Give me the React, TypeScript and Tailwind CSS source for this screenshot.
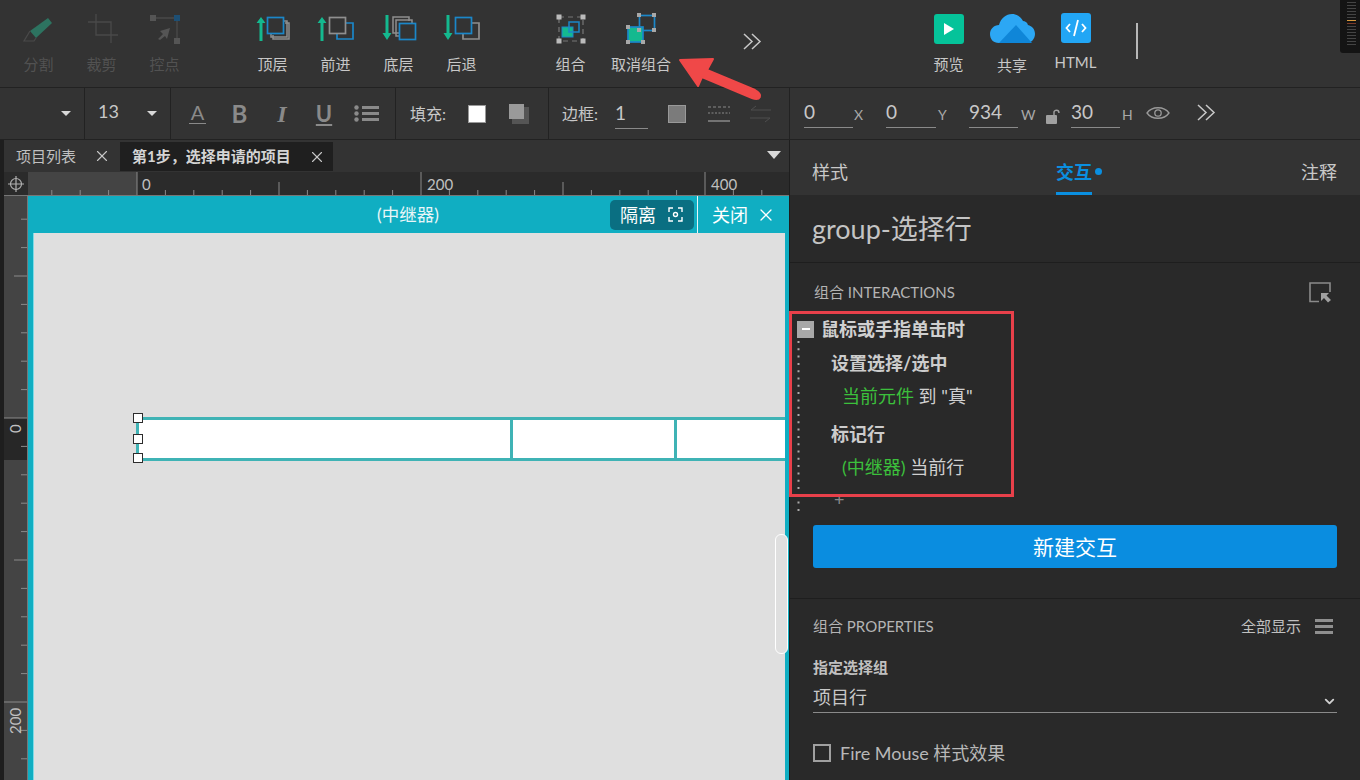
// Axure-style editor window: toolbar, canvas and interactions panel
import React from 'react';
import { ChevronDown, X } from 'lucide-react';

const GRAY = '#8f8f8f';
const BLUE = '#1b87c9';
const GREEN = '#14b98f';

function Arrow({ x, up }: { x: number; up: boolean }) {
  return up ? (
    <path d={`M${x - 1.5} 29V11H${x - 4.5}L${x} 5L${x + 4.5} 11H${x + 1.5}V29Z`} fill={GREEN} />
  ) : (
    <path d={`M${x - 1.5} 3V21H${x - 4.5}L${x} 28L${x + 4.5} 21H${x + 1.5}V3Z`} fill={GREEN} />
  );
}

function Icon({ children }: { children: React.ReactNode }) {
  return (
    <svg width="40" height="32" viewBox="0 0 40 32" fill="none">
      {children}
    </svg>
  );
}

const icons: Record<string, React.ReactNode> = {
  split: (
    <Icon>
      <path d="M11 19L29 6L33 11L17 26Z" fill="#2d7360" />
      <path d="M11 19L5 29H15L17 26" stroke="#4a4a4a" strokeWidth="1.2" />
    </Icon>
  ),
  crop: (
    <Icon>
      <path d="M6 10H29V31M14 2V23H36" stroke="#4a4a4a" strokeWidth="1.3" />
    </Icon>
  ),
  points: (
    <Icon>
      <path d="M8 6H32V29" stroke="#4a4a4a" strokeWidth="1.3" />
      <rect x="5" y="3" width="6" height="6" fill="#555" />
      <rect x="29" y="3" width="6" height="6" fill="#1d4f74" />
      <rect x="29" y="26" width="6" height="6" fill="#555" />
      <path d="M25 16L15 19L18 22L13 27L15 28L20 24L22 27Z" fill="#555" />
    </Icon>
  ),
  top: (
    <Icon>
      <Arrow x={8} up />
      <path d="M20 23V27H36V11H32" stroke={GRAY} strokeWidth="1.5" />
      <path d="M18 21V25H34V9H30" stroke={GRAY} strokeWidth="1.5" />
      <rect x="14.5" y="5.5" width="16" height="16" stroke={BLUE} strokeWidth="1.7" />
    </Icon>
  ),
  forward: (
    <Icon>
      <Arrow x={6} up />
      <path d="M30 11H37V27H21V22" stroke={BLUE} strokeWidth="1.7" />
      <rect x="13.5" y="5.5" width="16" height="16" stroke={GRAY} strokeWidth="1.7" />
    </Icon>
  ),
  bottom: (
    <Icon>
      <Arrow x={8} up={false} />
      <path d="M20 21H14V5H30V9" stroke={GRAY} strokeWidth="1.5" />
      <path d="M20 24H17V8H33V11" stroke={GRAY} strokeWidth="1.5" />
      <rect x="20.5" y="11.5" width="16" height="16" stroke={BLUE} strokeWidth="1.7" />
    </Icon>
  ),
  back: (
    <Icon>
      <Arrow x={6} up={false} />
      <path d="M30 11H37V27H21V22" stroke={GRAY} strokeWidth="1.7" />
      <rect x="13.5" y="5.5" width="16" height="16" stroke={BLUE} strokeWidth="1.7" />
    </Icon>
  ),
  group: (
    <Icon>
      <rect x="8" y="5" width="24" height="24" stroke="#777" strokeWidth="1.2" strokeDasharray="5 4" />
      <rect x="5.5" y="2.5" width="5" height="5" fill="#bbb" />
      <rect x="29.5" y="2.5" width="5" height="5" fill="#bbb" />
      <rect x="5.5" y="26.5" width="5" height="5" fill="#bbb" />
      <rect x="29.5" y="26.5" width="5" height="5" fill="#bbb" />
      <rect x="11" y="15" width="11" height="10" fill={GREEN} stroke={BLUE} />
      <rect x="18" y="10" width="10" height="10" stroke={BLUE} strokeWidth="1.5" />
    </Icon>
  ),
  ungroup: (
    <Icon>
      <rect x="18.5" y="3.5" width="15" height="15" stroke={BLUE} strokeWidth="1.7" />
      <rect x="7" y="15" width="15" height="15" fill={GREEN} stroke={BLUE} strokeWidth="1.7" />
      {[
        [18, 3],
        [33, 3],
        [33, 18],
        [18, 18],
        [7, 15],
        [7, 30],
        [22, 30],
      ].map(([x, y]) => (
        <rect key={`${x}-${y}`} x={x - 2} y={y - 2} width="4" height="4" fill="#a8a8a8" />
      ))}
    </Icon>
  ),
};

function ToolItem({ label, icon, dim, width = 'w-[63px]' }: { label: string; icon: string; dim?: boolean; width?: string }) {
  return (
    <div className={`${width} flex flex-col items-center pt-[12px]`}>
      <div className="h-[32px]">{icons[icon]}</div>
      <span className={`mt-[10px] text-[15px] leading-[20px] whitespace-nowrap ${dim ? 'text-[#525252]' : 'text-[#c8c8c8]'}`}>{label}</span>
    </div>
  );
}

function DoubleChevron() {
  return (
    <svg width="19" height="17" viewBox="0 0 19 17" fill="none" stroke="#c8c8c8" strokeWidth="1.5">
      <path d="M1 1L9 8.5L1 16M9 1L17 8.5L9 16" />
    </svg>
  );
}

function Caret({ className = '' }: { className?: string }) {
  return <span className={`w-0 h-0 border-x-[5px] border-x-transparent border-t-[5px] border-t-[#d8d8d8] ${className}`} />;
}

function NumField({ value, width }: { value: string; width: string }) {
  return <div className={`${width} h-[30px] border-b border-[#8a8a8a] text-[19px] leading-[27px] text-[#c8c8c8]`}>{value}</div>;
}

function Axis({ label, className = '' }: { label: string; className?: string }) {
  return <span className={`text-[14px] text-[#a8a8a8] pt-[3px] ${className}`}>{label}</span>;
}

function TopRuler() {
  const ticks = Array.from({ length: 27 }, (_, i) => 137 - 28.4 * 3 + 28.4 * i);
  return (
    <svg width="761" height="24" viewBox="28 172 761 24" className="block">
      <rect x="28" y="172" width="109" height="24" fill="#444" />
      <rect x="137" y="172" width="652" height="24" fill="#2b2b2b" />
      {ticks.map((p, i) => {
        const rel = i - 3;
        const major = rel % 10 === 0;
        const mid = rel % 5 === 0;
        return <line key={i} x1={p} x2={p} y1={major ? 172 : mid ? 182 : 190} y2="196" stroke="#8a8a8a" />;
      })}
      <line x1="28" x2="789" y1="195.5" y2="195.5" stroke="#777" />
      <text x="142" y="190" fontSize="15" fill="#c0c0c0">0</text>
      <text x="427" y="190" fontSize="15" fill="#c0c0c0">200</text>
      <text x="711" y="190" fontSize="15" fill="#c0c0c0">400</text>
    </svg>
  );
}

function LeftRuler() {
  const ticks = Array.from({ length: 22 }, (_, i) => 418 + 28.4 * (i - 8));
  return (
    <svg width="24" height="584" viewBox="4 196 24 584" className="block shrink-0">
      <rect x="4" y="196" width="24" height="584" fill="#444" />
      <rect x="4" y="418" width="24" height="42" fill="#272727" />
      {ticks.map((y, i) => {
        const rel = i - 8;
        const major = rel % 10 === 0;
        const mid = rel % 5 === 0;
        return <line key={i} x1={major ? 4 : mid ? 14 : 21} x2="28" y1={y} y2={y} stroke="#8a8a8a" />;
      })}
      <line x1="27.5" x2="27.5" y1="196" y2="780" stroke="#777" />
      <text transform="translate(21 433) rotate(-90)" fontSize="15" fill="#c0c0c0">0</text>
      <text transform="translate(21 734) rotate(-90)" fontSize="15" fill="#c0c0c0">200</text>
    </svg>
  );
}

function Handle({ className }: { className: string }) {
  return <div className={`absolute left-[105px] w-[10px] h-[10px] bg-white border-[1.5px] border-[#2c2c2c] ${className}`} />;
}

export default function App() {
  return (
    <div className="relative w-[1360px] h-[780px] overflow-hidden flex flex-col bg-[#333333] font-['Lato','Noto_Sans_CJK_SC',sans-serif]">
      {/* Top toolbar */}
      <div className="h-[88px] shrink-0 flex pl-[7px] border-b border-[#222222]">
        <ToolItem label="分割" icon="split" dim />
        <ToolItem label="裁剪" icon="crop" dim />
        <ToolItem label="控点" icon="points" dim />
        <div className="w-[45px]" />
        <ToolItem label="顶层" icon="top" />
        <ToolItem label="前进" icon="forward" />
        <ToolItem label="底层" icon="bottom" />
        <ToolItem label="后退" icon="back" />
        <div className="w-[46px]" />
        <ToolItem label="组合" icon="group" />
        <div className="w-[6px]" />
        <ToolItem label="取消组合" icon="ungroup" width="w-[66px]" />
        <div className="w-[243px] flex items-start pt-[33px] pl-[69px]">
          <DoubleChevron />
        </div>
        <div className="w-[63px] flex flex-col items-center pt-[14px]">
          <div className="w-[30px] h-[30px] rounded-[3px] bg-[#05c39a] flex items-center justify-center">
            <svg width="10" height="12" viewBox="0 0 10 12"><path d="M0 0L10 6L0 12Z" fill="#fff" /></svg>
          </div>
          <span className="mt-[10px] text-[15px] leading-[20px] text-[#c8c8c8]">预览</span>
        </div>
        <div className="w-[64px] flex flex-col items-center pt-[14px]">
          <svg width="45" height="30" viewBox="0 0 45 30">
            <path d="M9 29C3 29 0 25 0 20C0 15 4 11 9 11C11 4 16 0 22 0C27 0 31 3 33 7C35 7 37 8 38 11C42 12 45 15 45 20C45 25 41 29 37 29Z" fill="#2ca7f4" />
            <path d="M9 29L26 11L42 29Z" fill="#0f86d8" />
          </svg>
          <span className="mt-[11px] text-[15px] leading-[20px] text-[#c8c8c8]">共享</span>
        </div>
        <div className="w-[63px] flex flex-col items-center pt-[13px]">
          <div className="w-[30px] h-[30px] rounded-[3px] bg-[#22a6f5] flex items-center justify-center">
            <svg width="22" height="18" viewBox="0 0 22 18" fill="none" stroke="#fff" strokeWidth="1.8">
              <path d="M5 5L1.5 9L5 13M17 5L20.5 9L17 13M13 1L9 17" />
            </svg>
          </div>
          <span className="mt-[9px] text-[15px] leading-[20px] text-[#c8c8c8]">HTML</span>
        </div>
        <div className="ml-[29px] mt-[23px] w-[2px] h-[36px] bg-[#b8b8b8]" />
      </div>

      {/* Format bar */}
      <div className="h-[52px] shrink-0 flex border-b border-[#222222] text-[#c8c8c8]">
        <div className="w-[85px] border-r border-[#222222] flex items-center justify-end pr-[13px]">
          <Caret />
        </div>
        <div className="w-[86px] border-r border-[#222222] flex items-center justify-between pl-[13px] pr-[13px]">
          <span className="text-[18px] pb-[4px]">13</span>
          <Caret />
        </div>
        <div className="w-[225px] border-r border-[#222222] flex items-center pl-[18px] gap-[21px] text-[#8a8a8a]">
          <div className="w-[17px] flex flex-col items-center">
            <span className="text-[20px] leading-[19px] text-[#8a8a8a]">A</span>
            <div className="w-[17px] h-px bg-[#8a8a8a] mt-[1px]" />
          </div>
          <span className="w-[25px] text-center text-[24px] font-bold leading-none">B</span>
          <span className="w-[18px] text-center text-[24px] font-bold italic leading-none font-['Liberation_Serif',serif]">I</span>
          <span className="w-[24px] text-center text-[22px] font-bold underline leading-none">U</span>
          <svg className="-ml-[3px]" width="25" height="17" viewBox="0 0 25 17" fill="#8a8a8a">
            <circle cx="2.5" cy="2.5" r="2.2" /><circle cx="2.5" cy="8.5" r="2.2" /><circle cx="2.5" cy="14.5" r="2.2" />
            <rect x="8" y="1" width="17" height="3" /><rect x="8" y="7" width="17" height="3" /><rect x="8" y="13" width="17" height="3" />
          </svg>
        </div>
        <div className="w-[153px] border-r border-[#222222] flex items-center pl-[14px]">
          <span className="text-[16px] w-[58px] whitespace-nowrap">填充:</span>
          <div className="w-[18px] h-[18px] bg-white border border-[#999]" />
          <div className="relative ml-[23px] w-[20px] h-[20px]">
            <div className="absolute left-[3px] top-[3px] w-[17px] h-[17px] bg-[#555555]" />
            <div className="absolute left-0 top-0 w-[15px] h-[15px] bg-[#9a9a9a]" />
          </div>
        </div>
        <div className="w-[241px] border-r border-[#222222] flex items-center pl-[13px]">
          <span className="text-[16px] w-[53px] whitespace-nowrap">边框:</span>
          <NumField value="1" width="w-[33px]" />
          <div className="ml-[20px] w-[18px] h-[18px] bg-[#7b7b7b] border border-[#999]" />
          <svg className="ml-[22px]" width="22" height="18" viewBox="0 0 22 18" stroke="#8a8a8a" fill="none">
            <path d="M0 2H22" strokeDasharray="3 2" /><path d="M0 8H22" strokeDasharray="2 1.5" /><path d="M0 16H22" strokeWidth="1.5" />
          </svg>
          <svg className="ml-[20px]" width="21" height="18" viewBox="0 0 21 18" stroke="#4e4e4e" fill="none">
            <path d="M21 5H1L6 1M0 13H20L15 17" />
          </svg>
        </div>
        <div className="flex-1 flex items-center pl-[14px] pb-[2px]">
          <NumField value="0" width="w-[49px]" />
          <Axis label="X" className="ml-[1px] w-[32px]" />
          <NumField value="0" width="w-[50px]" />
          <Axis label="Y" className="ml-[2px] w-[31px]" />
          <NumField value="934" width="w-[49px]" />
          <Axis label="W" className="ml-[3px] w-[25px]" />
          <svg className="mt-[8px]" width="15" height="16" viewBox="0 0 15 16" fill="none">
            <rect x="0" y="6" width="11" height="9" rx="1" fill="#a0a0a0" />
            <path d="M8 6V3C8 1 13 0 13 4" stroke="#a0a0a0" strokeWidth="1.4" />
          </svg>
          <div className="w-[10px]" />
          <NumField value="30" width="w-[49px]" />
          <Axis label="H" className="ml-[2px] w-[23px]" />
          <svg className="ml-[1px]" width="24" height="14" viewBox="0 0 24 14" fill="none" stroke="#9a9a9a" strokeWidth="1.3">
            <path d="M1 7C6 0 18 0 23 7C18 14 6 14 1 7Z" /><circle cx="12" cy="7" r="3.2" />
          </svg>
          <div className="ml-[27px]"><DoubleChevron /></div>
        </div>
      </div>

      <div className="flex-1 flex min-h-0">
        {/* Canvas column */}
        <div className="w-[789px] shrink-0 flex flex-col bg-[#1e1e1e]">
          <div className="h-[32px] shrink-0 flex pt-[2px] bg-[#333333] border-l-4 border-[#1e1e1e]">
            <div className="w-[116px] h-[28px] flex items-center pl-[12px] justify-between pr-[9px]">
              <span className="text-[15px] text-[#c0c0c0]">项目列表</span>
              <X size={18} strokeWidth={1.5} className="text-[#c8c8c8]" />
            </div>
            <div className="w-[213px] h-[29px] bg-[#1f1f1f] flex items-center pl-[12px] justify-between pr-[7px]">
              <span className="text-[15px] font-bold text-[#d4d4d4] whitespace-nowrap">{'第1步\uFF0C选择申请的项目'}</span>
              <X size={18} strokeWidth={1.5} className="text-[#c8c8c8]" />
            </div>
            <div className="flex-1 flex justify-end items-center pr-[8px] pb-[4px]">
              <span className="w-0 h-0 border-x-[7px] border-x-transparent border-t-[8px] border-t-[#d8d8d8]" />
            </div>
          </div>

          <div className="h-[24px] shrink-0 flex pl-[4px]">
            <div className="w-[24px] flex items-center justify-center bg-[#2b2b2b] border-b border-[#777]">
              <svg width="16" height="16" viewBox="0 0 16 16" fill="none" stroke="#b0b0b0" strokeWidth="1.2">
                <circle cx="8" cy="8" r="5.5" /><path d="M8 0V16M0 8H16" />
              </svg>
            </div>
            <TopRuler />
          </div>

          <div className="flex-1 flex pl-[4px] min-h-0">
            <LeftRuler />
            <div className="relative flex-1 flex flex-col bg-[#10aec2]">
              <div className="relative h-[37px] shrink-0 flex items-center text-white">
                <span className="absolute left-[349px] top-[6px] text-[17.5px] text-[#e8f6f8]">(中继器)</span>
                <div className="ml-[582px] w-[84px] h-[30px] rounded-[5px] bg-[#0a6f82] flex items-center pl-[10px] gap-[12px]">
                  <span className="text-[18px] leading-none">隔离</span>
                  <svg width="15" height="15" viewBox="0 0 15 15" fill="none" stroke="#fff" strokeWidth="1.4">
                    <path d="M1 5V1H5M10 1H14V5M14 10V14H10M5 14H1V10" /><circle cx="7.5" cy="7.5" r="2" />
                  </svg>
                </div>
                <div className="ml-[3px] w-[1px] h-[37px] bg-[#e8f6f8]" />
                <span className="ml-[14px] text-[18px] leading-none">关闭</span>
                <X size={20} strokeWidth={1.5} className="ml-[8px]" />
              </div>
              <div className="flex-1 ml-[5px] mr-[4px] bg-[#dfdfdf] border-l border-[#7fdbe6]" />

              {/* Selected row on the canvas */}
              <div className="absolute left-[108px] top-[221px] w-[649px] h-[44px] flex bg-white border-y-[3px] border-l-[3px] border-[#3fb3b5]">
                <div className="w-[374px] border-r-[3px] border-[#3fb3b5]" />
                <div className="w-[164px] border-r-[3px] border-[#3fb3b5]" />
              </div>
              <Handle className="top-[217px]" />
              <Handle className="top-[238px]" />
              <Handle className="top-[257px]" />

              {/* Scrollbar */}
              <div className="absolute left-[747px] top-[338px] w-[13px] h-[120px] rounded-[6px] bg-[#dfdfdf] border border-white" />
            </div>
          </div>
        </div>

        {/* Right panel */}
        <div className="flex-1 flex flex-col bg-[#292929] border-l border-[#1e1e1e] text-[#c8c8c8]">
          <div className="h-[55px] shrink-0 flex items-stretch justify-between px-[22px] bg-[#333333]">
            <span className="text-[18px] pt-[19px]">样式</span>
            <div className="flex flex-col ml-[9px]">
              <div className="flex items-center pt-[19px]">
                <div className="border-b-[3px] border-[#0a8fe0] h-[36px]">
                  <span className="text-[18px] leading-[27px] font-bold text-[#0a8fe0] block">交互</span>
                </div>
                <div className="w-[7px] h-[7px] rounded-full bg-[#0a8fe0] ml-[3px] -mt-[12px]" />
              </div>
            </div>
            <span className="text-[18px] pt-[19px] pr-[1px]">注释</span>
          </div>

          <div className="h-[68px] shrink-0 border-b border-[#1e1e1e] pl-[22px] pt-[15px] text-[27px] leading-[38px] text-[#c4c4c4]">group-选择行</div>

          <div className="flex justify-between items-center pl-[24px] pr-[28px] h-[22px] mt-[18px]">
            <span className="text-[15px] text-[#b4b4b4]">组合 INTERACTIONS</span>
            <svg width="23" height="21" viewBox="0 0 23 21" fill="none">
              <path d="M10 19.5H1V1H21V10" stroke="#8a8a8a" strokeWidth="1.6" />
              <path d="M12 11H20L17.5 13.5L22 18L19 20.5L15 16L12 19Z" fill="#a0a0a0" />
            </svg>
          </div>

          {/* Interaction tree */}
          <div className="pl-[7px] mt-[16px]">
            <div className="flex items-center h-[20px]">
              <div className="w-[17px] h-[17px] bg-[#a8a8a8] flex items-center justify-center">
                <div className="w-[8px] h-[2px] bg-white" />
              </div>
              <span className="ml-[7px] text-[18px] font-bold text-[#d0d0d0] whitespace-nowrap">鼠标或手指单击时</span>
            </div>
            <div className="flex">
              <svg width="3" height="172" className="shrink-0">
                <line x1="1.5" x2="1.5" y1="2" y2="172" stroke="#aaaaaa" strokeWidth="2" strokeDasharray="2 5.3" />
              </svg>
              <div className="pl-[31px] pt-[12px]">
                <div className="h-[24px] text-[18px] leading-[24px] font-bold text-[#cccccc]">设置选择/选中</div>
                <div className="h-[24px] mt-[9px] pl-[11px] text-[18px] leading-[24px] text-[#d0d0d0]">
                  <span className="text-[#3cc03c]">当前元件</span> 到 "真"
                </div>
                <div className="h-[24px] mt-[14px] text-[18px] leading-[24px] font-bold text-[#cccccc]">标记行</div>
                <div className="h-[24px] mt-[9px] pl-[11px] text-[18px] leading-[24px] text-[#d0d0d0]">
                  <span className="text-[#3cc03c]">(中继器)</span> 当前行
                </div>
                <div className="mt-[8px] ml-[3px] text-[18px] leading-[24px] text-[#888888]">+</div>
              </div>
            </div>
          </div>

          <div className="mx-[23px] mt-[14px] h-[43px] shrink-0 rounded-[3px] bg-[#0a8de0] flex items-center justify-center text-[21px] text-white">新建交互</div>

          <div className="mt-[30px] border-t border-[#1e1e1e] pl-[23px] pr-[23px]">
            <div className="flex justify-between items-center mt-[16px] h-[22px]">
              <span className="text-[15px] text-[#b4b4b4]">组合 PROPERTIES</span>
              <div className="flex items-center gap-[14px] pr-[4px]">
                <span className="text-[15px] text-[#c0c0c0]">全部显示</span>
                <div className="w-[18px] h-[15px] flex flex-col justify-between">
                  <div className="h-[3px] bg-[#8f8f8f]" /><div className="h-[3px] bg-[#8f8f8f]" /><div className="h-[3px] bg-[#8f8f8f]" />
                </div>
              </div>
            </div>
            <div className="mt-[20px] text-[15px] leading-[20px] font-bold text-[#c0c0c0]">指定选择组</div>
            <div className="mt-[6px] h-[30px] flex justify-between items-center border-b border-[#8a8a8a]">
              <span className="text-[18px] text-[#c8c8c8]">项目行</span>
              <ChevronDown size={15} strokeWidth={3} className="text-[#d0d0d0] mt-[8px]" />
            </div>
            <div className="mt-[30px] flex items-center gap-[9px]">
              <div className="w-[18px] h-[18px] border-2 border-[#a0a0a0]" />
              <span className="text-[18px] leading-[20px] text-[#b8b8b8]">Fire Mouse 样式效果</span>
            </div>
          </div>
        </div>
      </div>

      {/* Annotation overlays */}
      <div className="absolute left-[789px] top-[311px] w-[225px] h-[186px] border-[3px] border-[#e8404a]" />
      <svg className="absolute left-[670px] top-[50px]" width="100" height="54" viewBox="670 50 100 54">
        <path d="M680 60L713 59L707 70L755 90C764 95 760 101 752 98L702 77L698 86Z" fill="#f04848" stroke="#f04848" strokeWidth="2" strokeLinejoin="round" />
      </svg>
      <div className="absolute right-0 top-0 w-[20px] h-[53px] rounded-bl-[3px] bg-[#141414] flex flex-col items-center pl-[3px] gap-[2px] pt-[2px]">
        {Array.from({ length: 15 }, (_, i) => (
          <div key={i} className={`w-[9px] h-[1px] ${i === 6 ? 'bg-[#d99a3c]' : i === 7 ? 'bg-[#7a3a2a]' : 'bg-[#444444]'}`} />
        ))}
      </div>
    </div>
  );
}
